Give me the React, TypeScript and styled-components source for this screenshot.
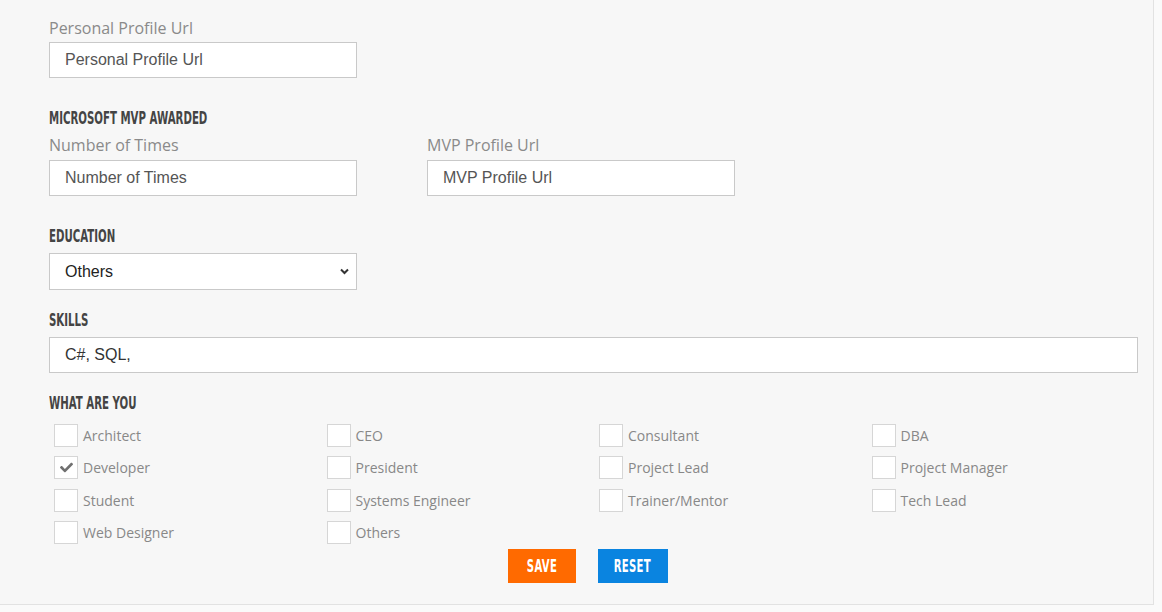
import React from "react";
import styled, { createGlobalStyle } from "styled-components";
import { FaCheck } from "react-icons/fa";

const GlobalStyle = createGlobalStyle`
  html, body { margin: 0; padding: 0; background: #fafafa; }
  * { box-sizing: border-box; }
`;

const Page = styled.div`
  width: 1154px;
  height: 605px;
  background: #f7f7f7;
  border-right: 1px solid #e2e2e2;
  border-bottom: 1px solid #e2e2e2;
  padding: 17px 15px 0 49px;
  display: flex;
  flex-direction: column;
`;

const Label = styled.label`
  display: block;
  font-family: "Open Sans", sans-serif;
  font-size: 16px;
  line-height: 22px;
  color: #8a8a8a;
`;

const Heading = styled.h4<{ $mt: number; $mb: number }>`
  margin: ${(p) => p.$mt}px 0 ${(p) => p.$mb}px 0;
  font-family: "DejaVu Sans Condensed", "DejaVu Sans", sans-serif;
  font-stretch: condensed;
  font-weight: 700;
  font-size: 18px;
  line-height: 22px;
  color: #444;
  transform: scaleX(0.63);
  transform-origin: left center;
  white-space: nowrap;
`;

const TextInput = styled.input<{ $w?: number; $mt?: number }>`
  display: block;
  width: ${(p) => (p.$w ? `${p.$w}px` : "100%")};
  height: 36px;
  margin-top: ${(p) => p.$mt ?? 3}px;
  padding: 0 15px;
  border: 1px solid #c9c9c9;
  background: #fff;
  font-family: "Liberation Sans", Arial, sans-serif;
  font-size: 16px;
  color: #333;
  outline: none;
  &::placeholder { color: #555; opacity: 1; }
`;

const TwoCols = styled.div`
  display: flex;
  gap: 70px;
`;

const Field = styled.div`
  display: flex;
  flex-direction: column;
`;

const SelectWrap = styled.div`
  position: relative;
  width: 308px;
  height: 37px;
`;

const Select = styled.select`
  appearance: none;
  -webkit-appearance: none;
  width: 100%;
  height: 100%;
  padding: 0 30px 0 15px;
  border: 1px solid #c9c9c9;
  border-radius: 0;
  background: #fff;
  font-family: "Liberation Sans", Arial, sans-serif;
  font-size: 16px;
  color: #222;
  outline: none;
`;

const Chevron = styled.svg`
  position: absolute;
  right: 8px;
  top: 15px;
  pointer-events: none;
`;

const CheckGrid = styled.div`
  display: grid;
  grid-template-columns: repeat(4, 272.5px);
  grid-auto-rows: 23px;
  row-gap: 9.3px;
`;

const CheckItem = styled.label`
  display: flex;
  align-items: center;
  gap: 5px;
  padding-left: 5px;
  font-family: "Open Sans", sans-serif;
  font-size: 14px;
  color: #888;
`;

const Box = styled.span`
  width: 24px;
  height: 23px;
  border: 1px solid #d6d6d6;
  background: #fff;
  display: flex;
  align-items: center;
  justify-content: center;
  color: #707070;
  flex: none;
`;

const Buttons = styled.div`
  display: flex;
  justify-content: center;
  gap: 22px;
  padding-right: 12px;
  margin-top: 5px;
`;

const Button = styled.button<{ $bg: string; $w: number }>`
  width: ${(p) => p.$w}px;
  height: 34px;
  border: none;
  background: ${(p) => p.$bg};
  color: #fff;
  padding: 0;
  display: flex;
  align-items: center;
  justify-content: center;
  overflow: visible;
`;

const ButtonText = styled.span`
  display: inline-block;
  font-family: "DejaVu Sans Condensed", "DejaVu Sans", sans-serif;
  font-stretch: condensed;
  font-weight: 700;
  font-size: 17px;
  letter-spacing: 0.5px;
  transform: scaleX(0.66);
  white-space: nowrap;
`;

const roles: { name: string; checked?: boolean }[] = [
  { name: "Architect" },
  { name: "CEO" },
  { name: "Consultant" },
  { name: "DBA" },
  { name: "Developer", checked: true },
  { name: "President" },
  { name: "Project Lead" },
  { name: "Project Manager" },
  { name: "Student" },
  { name: "Systems Engineer" },
  { name: "Trainer/Mentor" },
  { name: "Tech Lead" },
  { name: "Web Designer" },
  { name: "Others" },
];

export default function App() {
  return (
    <>
      <GlobalStyle />
      <Page>
        <Label>Personal Profile Url</Label>
        <TextInput $w={308} placeholder="Personal Profile Url" />

        <Heading $mt={29} $mb={5}>MICROSOFT MVP AWARDED</Heading>
        <TwoCols>
          <Field>
            <Label>Number of Times</Label>
            <TextInput $w={308} $mt={4} placeholder="Number of Times" />
          </Field>
          <Field>
            <Label>MVP Profile Url</Label>
            <TextInput $w={308} $mt={4} placeholder="MVP Profile Url" />
          </Field>
        </TwoCols>

        <Heading $mt={29} $mb={6}>EDUCATION</Heading>
        <SelectWrap>
          <Select defaultValue="Others">
            <option>Select</option>
            <option>Graduate</option>
            <option>Post Graduate</option>
            <option>Others</option>
          </Select>
          <Chevron width="9" height="7" viewBox="0 0 9 7">
            <path d="M1 1.5 L4.5 5 L8 1.5" fill="none" stroke="#333" strokeWidth="2" />
          </Chevron>
        </SelectWrap>

        <Heading $mt={19} $mb={1}>SKILLS</Heading>
        <TextInput $mt={5} defaultValue="C#, SQL," />

        <Heading $mt={19} $mb={10}>WHAT ARE YOU</Heading>
        <CheckGrid>
          {roles.map((r) => (
            <CheckItem key={r.name}>
              <Box>{r.checked && <FaCheck size={13} />}</Box>
              {r.name}
            </CheckItem>
          ))}
        </CheckGrid>

        <Buttons>
          <Button $bg="#ff6a00" $w={68}>
            <ButtonText>SAVE</ButtonText>
          </Button>
          <Button $bg="#0a84e0" $w={70}>
            <ButtonText>RESET</ButtonText>
          </Button>
        </Buttons>
      </Page>
    </>
  );
}
